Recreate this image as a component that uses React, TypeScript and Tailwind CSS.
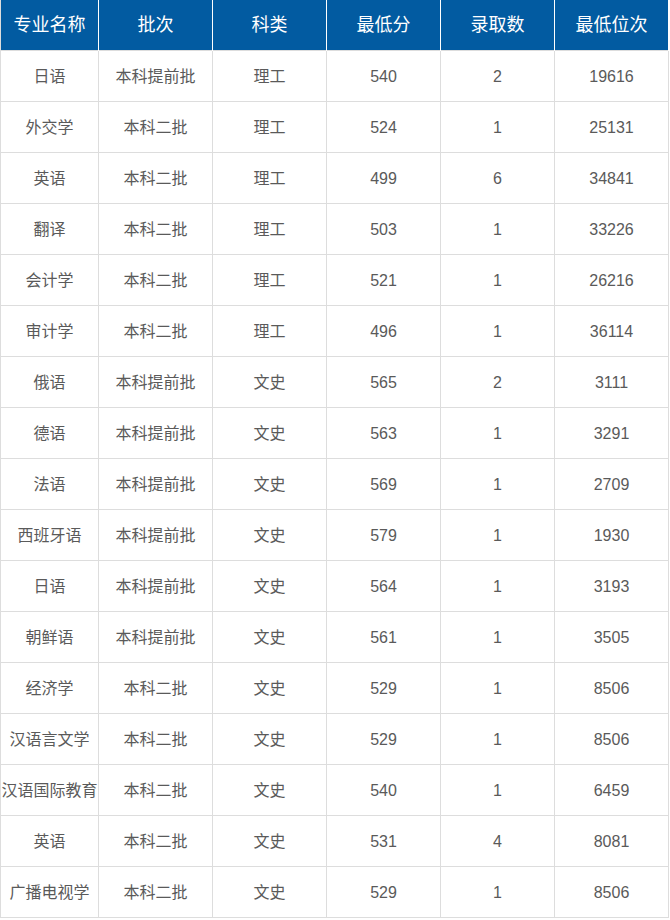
const headers = ['专业名称', '批次', '科类', '最低分', '录取数', '最低位次'];

const rows: string[][] = [
  ['日语', '本科提前批', '理工', '540', '2', '19616'],
  ['外交学', '本科二批', '理工', '524', '1', '25131'],
  ['英语', '本科二批', '理工', '499', '6', '34841'],
  ['翻译', '本科二批', '理工', '503', '1', '33226'],
  ['会计学', '本科二批', '理工', '521', '1', '26216'],
  ['审计学', '本科二批', '理工', '496', '1', '36114'],
  ['俄语', '本科提前批', '文史', '565', '2', '3111'],
  ['德语', '本科提前批', '文史', '563', '1', '3291'],
  ['法语', '本科提前批', '文史', '569', '1', '2709'],
  ['西班牙语', '本科提前批', '文史', '579', '1', '1930'],
  ['日语', '本科提前批', '文史', '564', '1', '3193'],
  ['朝鲜语', '本科提前批', '文史', '561', '1', '3505'],
  ['经济学', '本科二批', '文史', '529', '1', '8506'],
  ['汉语言文学', '本科二批', '文史', '529', '1', '8506'],
  ['汉语国际教育', '本科二批', '文史', '540', '1', '6459'],
  ['英语', '本科二批', '文史', '531', '4', '8081'],
  ['广播电视学', '本科二批', '文史', '529', '1', '8506'],
];

const widths = ['w-[98px]', 'w-[114px]', 'w-[114px]', 'w-[114px]', 'w-[114px]', 'w-[114px]'];

export default function App() {
  return (
    <div className="w-[670px] h-[920px] overflow-hidden bg-white font-['Liberation_Sans','Noto_Sans_CJK_SC',sans-serif]">
      <table className="w-[669px] table-fixed border-collapse">
        <colgroup>
          {widths.map((w, i) => (
            <col key={i} className={w} />
          ))}
        </colgroup>
        <thead>
          <tr className="h-[50px] bg-[#025ba1]">
            {headers.map((h, i) => (
              <th
                key={i}
                className="border-x border-white p-0 pt-[2px] text-center text-[18px] font-normal text-white first:border-l-[#dddddd]"
              >
                {h}
              </th>
            ))}
          </tr>
        </thead>
        <tbody>
          {rows.map((r, i) => (
            <tr key={i} className="h-[51px]">
              {r.map((c, j) => (
                <td
                  key={j}
                  className="border border-[#dddddd] p-0 pt-[2px] text-center text-[16px] whitespace-nowrap text-[#5a5a5a]"
                >
                  {c}
                </td>
              ))}
            </tr>
          ))}
        </tbody>
      </table>
    </div>
  );
}
